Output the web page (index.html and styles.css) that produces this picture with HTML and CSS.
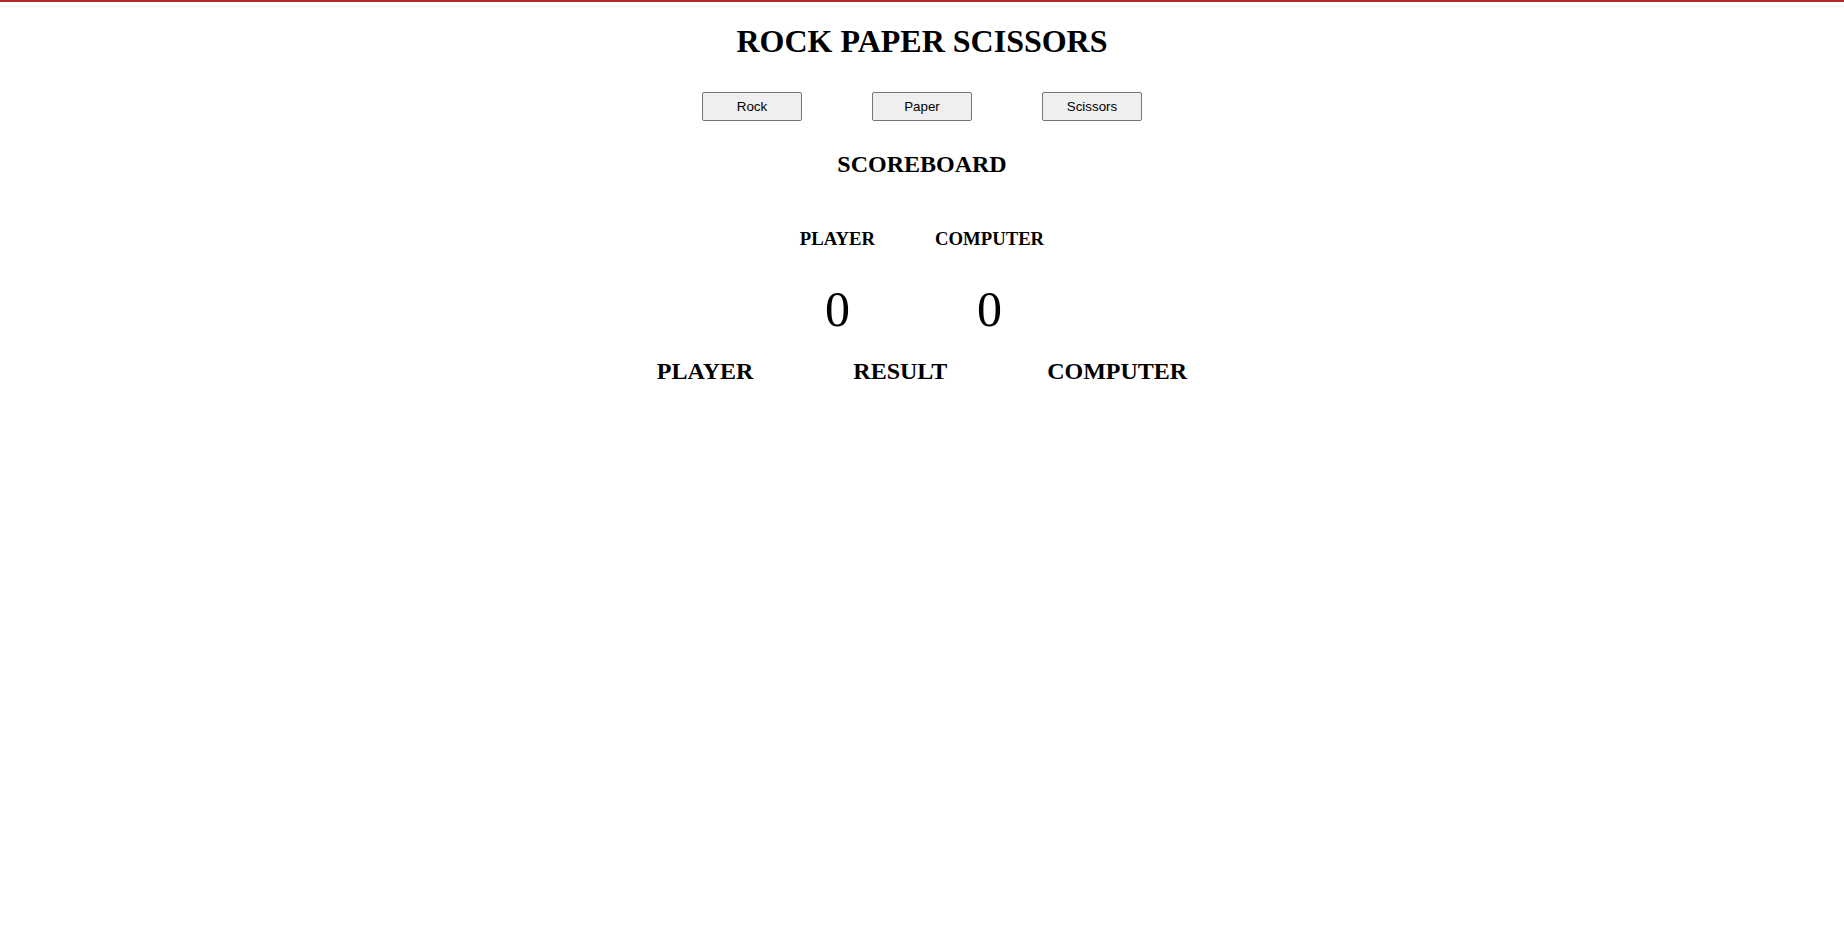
FILE: index.html
```html
<!DOCTYPE html>
<html lang="en">
<head>
<meta charset="utf-8">
<title>Rock Paper Scissors</title>
<link rel="stylesheet" href="styles.css">
</head>
<body>
  <h1 class="title">ROCK PAPER SCISSORS</h1>
  <div class="choices">
    <button class="choice">Rock</button>
    <button class="choice">Paper</button>
    <button class="choice">Scissors</button>
  </div>
  <h2 class="board-title">SCOREBOARD</h2>
  <div class="scores">
    <div class="score-col">
      <h3 class="score-label">PLAYER</h3>
      <div class="score-value">0</div>
    </div>
    <div class="score-col">
      <h3 class="score-label">COMPUTER</h3>
      <div class="score-value">0</div>
    </div>
  </div>
  <div class="result-row">
    <h2 class="result-head">PLAYER</h2>
    <h2 class="result-head">RESULT</h2>
    <h2 class="result-head">COMPUTER</h2>
  </div>
</body>
</html>
```
FILE: styles.css
```css
html, body {
  margin: 0;
  padding: 0;
  background: #ffffff;
}

body {
  border-top: 2px solid #b22a2a;
  font-family: "Liberation Serif", "Times New Roman", serif;
  color: #000;
  text-align: center;
}

.title {
  font-size: 32px;
  font-weight: bold;
  line-height: 37px;
  margin: 21px 0 0;
}

.choices {
  display: flex;
  justify-content: center;
  gap: 70px;
  margin-top: 32px;
}

.choice {
  width: 100px;
  height: 29px;
  padding: 0;
  font-family: "Liberation Sans", Arial, sans-serif;
  font-size: 13.33px;
  color: #000;
  background: #efefef;
  border: 1px solid #767676;
  border-radius: 2px;
}

.board-title {
  font-size: 24px;
  font-weight: bold;
  line-height: 28px;
  margin: 29px 0 0;
}

.scores {
  display: flex;
  justify-content: center;
  gap: 60px;
  margin-top: 50px;
}

.score-col {
  display: flex;
  flex-direction: column;
  align-items: center;
}

.score-label {
  font-size: 18.72px;
  font-weight: bold;
  line-height: 21px;
  margin: 0;
}

.score-value {
  font-size: 50px;
  line-height: 57px;
  margin-top: 32px;
}

.result-row {
  display: flex;
  justify-content: center;
  gap: 100px;
  margin-top: 19px;
}

.result-head {
  font-size: 24px;
  font-weight: bold;
  line-height: 28px;
  margin: 0;
}
```
